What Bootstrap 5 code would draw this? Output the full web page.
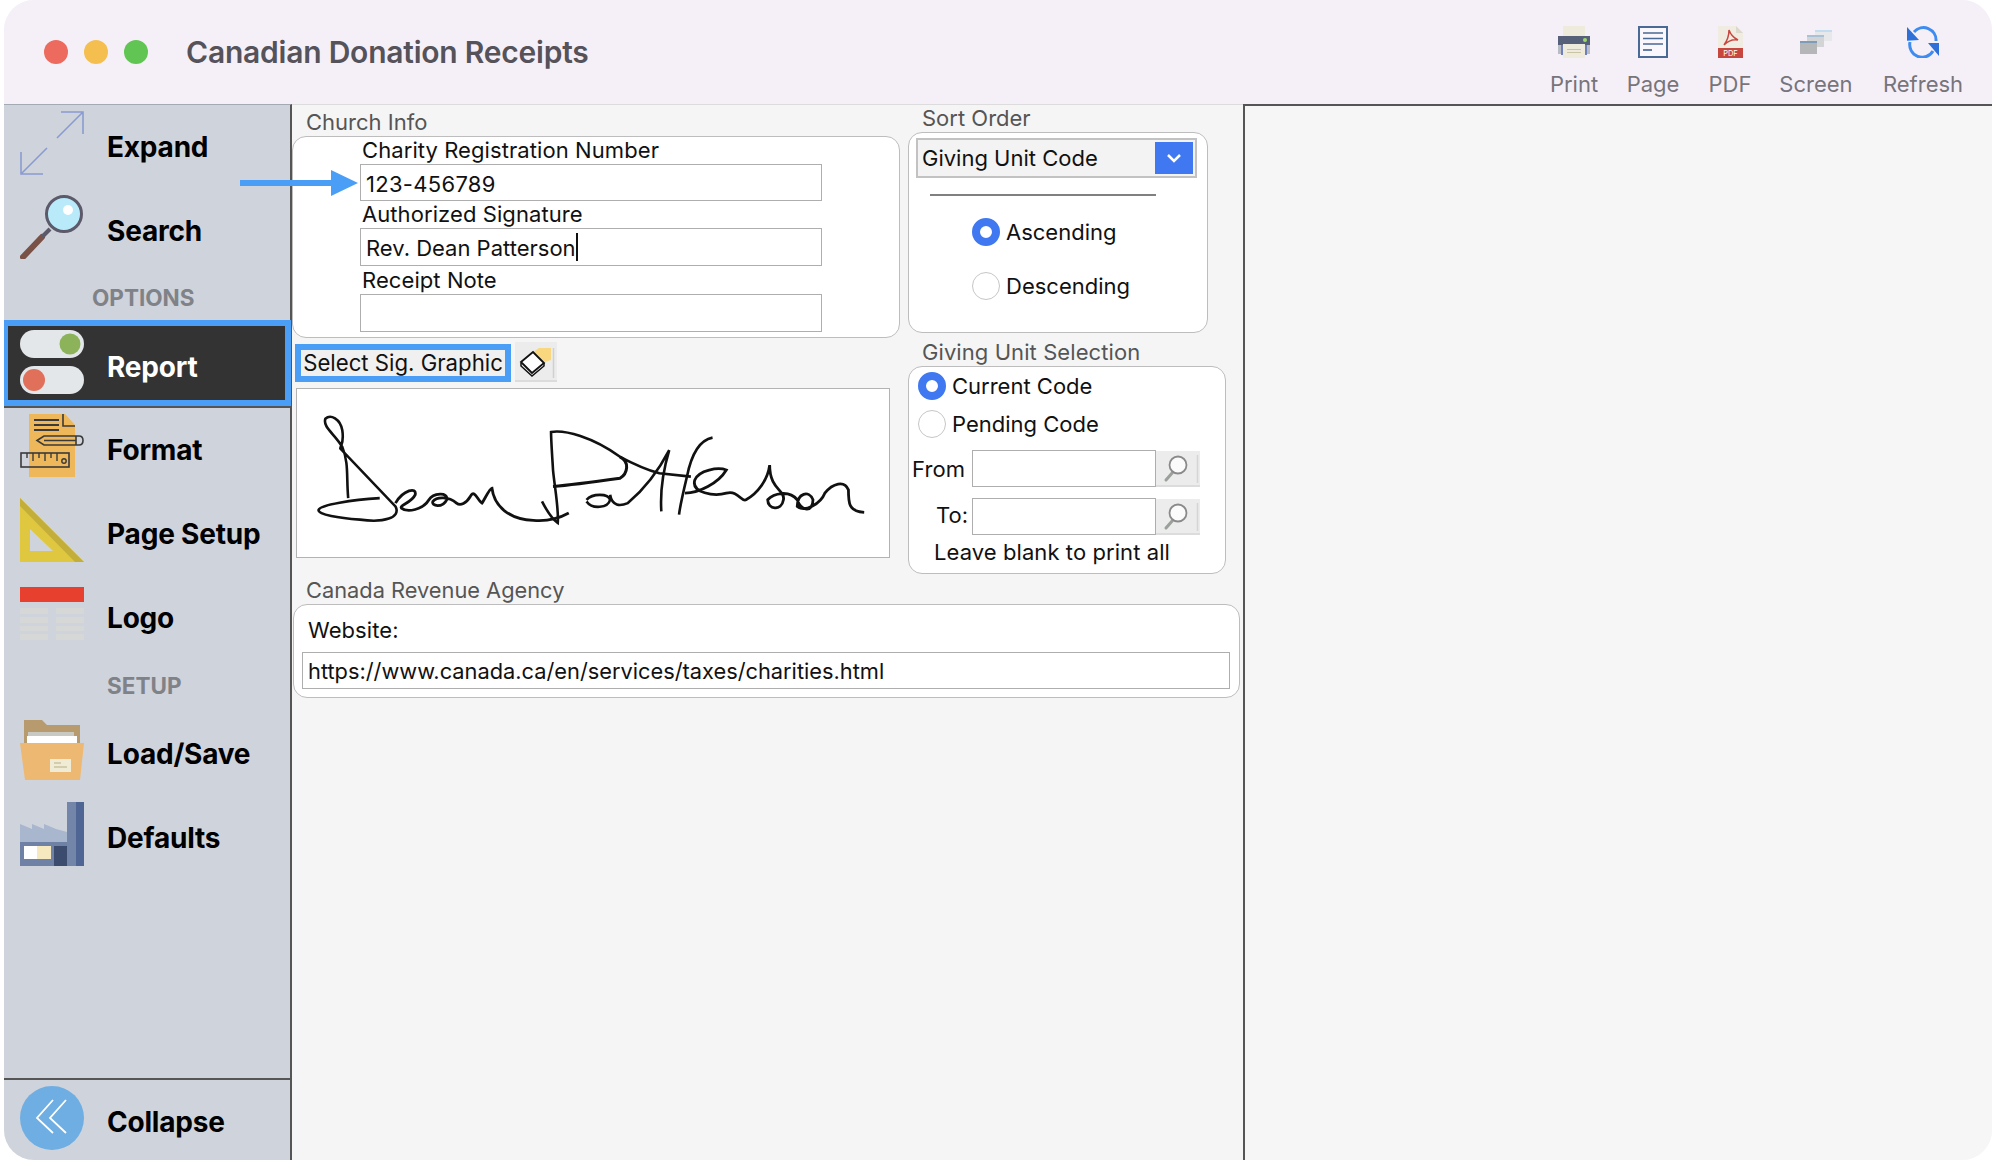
<!DOCTYPE html>
<html lang="en">
<head>
  <meta charset="UTF-8">
  <title>Canadian Donation Receipts</title>
  <link href="https://cdn.jsdelivr.net/npm/bootstrap@5.3.0/dist/css/bootstrap.min.css" rel="stylesheet">
  <style>
    html, body { height: 100%; background: #fff; overflow: hidden; }
    body { font-family: Inter, "Liberation Sans", sans-serif; color: #111; }
    .app-win { position: relative; margin-left: 4px; width: 1988px; height: 1160px; border-radius: 30px; overflow: hidden; background: #f5f5f5; }
    .title-bar { height: 104px; background: #f5f0f8; }
    .lights { padding-left: 40px; gap: 16px; margin-top: -1px; }
    .lights i { display: block; width: 24px; height: 24px; border-radius: 50%; }
    .win-title { margin-left: 38px; font-size: 30px; font-weight: 600; color: #56525a; line-height: 1; letter-spacing: -.22px; }
    .tool-item { position: absolute; top: 26px; display: flex; flex-direction: column; align-items: center; width: 100px; font-size: 22px; color: #77747b; line-height: 1; }
    .tool-item svg { height: 32px; margin-bottom: 15px; }
    .main-area { height: 1056px; }

    .side-bar { width: 288px; background: #cfd3dc; border-right: 2px solid #555; border-top: 1px solid #a5a9b3; }
    .side-row { height: 84px; padding-left: 16px; font-size: 28px; font-weight: 700; color: #000; letter-spacing: -.2px; }
    .side-row svg { width: 64px; height: 64px; margin-bottom: 8px; margin-right: 23px; flex: none; }
    .side-head { font-size: 22.5px; font-weight: 700; color: #7f8287; padding-top: 2px; }
    .side-sel { height: 86px; margin: 0 0 0 -2px; width: 289px; background: #333; border: 6px solid #4a9ef5; color: #fff; padding-left: 12px; padding-top: 8px; position: relative; z-index: 1; }
    .side-sel svg { margin-bottom: 10px; }
    .side-foot { height: 82px; border-top: 2px solid #555; padding-top: 4px; }

    .mid-pane { width: 951px; border-top: 1px solid #dcdcdc; }
    .end-pane { border-left: 2px solid #555; border-top: 2px solid #555; background: #f6f6f6; }
    .left-col { width: 608px; }
    .right-col { width: 318px; margin-left: 8px; }
    .grp-label { font-size: 22px; color: #555; line-height: 1; }
    .grp-box { background: #fff; border: 1.5px solid #bdbdbd; border-radius: 14px; }
    .fld-label { font-size: 22px; line-height: 1; color: #111; letter-spacing: .08px; }
    .fld-input { background: #fff; border: 1.5px solid #aeaeae; font-size: 22px; line-height: 1; color: #111; display: flex; align-items: center; padding: 2px 0 0 5px; }
    .caret-bar { display: inline-block; width: 2px; height: 28px; background: #111; margin-top: -2px; }
    .sig-btn { width: 216px; height: 38px; border: 6px solid #4a9ef5; background: #f0f0f0; font-size: 22.2px; }
    .icon-btn { background: #ececec; border-bottom: 2px solid #dcdcdc; }
    .sig-box { width: 594px; height: 170px; background: #fff; border: 1.5px solid #b3b3b3; margin-left: 4px; }
    .sig-box svg { display: block; width: 100%; height: 100%; }
    .sel-box { height: 40px; margin: 5px 10px 0 7px; background: #f3f3f3; border: 2px solid #c2c2c2; font-size: 22px; padding: 0 2px 0 4px; }
    .sel-arrow { width: 38px; height: 32px; background: #3f78f0; margin-top: -1px; }
    .sep-line { height: 2px; background: #808080; width: 226px; margin: 16px 0 0 21px; }
    .rd { width: 28px; height: 28px; border-radius: 50%; background: #fff; border: 1px solid #c6c6c6; flex: none; }
    .rd-on { background: #fff; border: 8px solid #3f78f0; }
    .rd-row { font-size: 22px; line-height: 1; }
    .arrow-mark { position: absolute; left: 236px; top: 170px; width: 118px; height: 26px; z-index: 3; }
  </style>
</head>
<body>
  <div class="app-win">
    <div class="title-bar d-flex align-items-center">
      <div class="lights d-flex">
        <i style="background:#ec6a5e"></i><i style="background:#f4bf4f"></i><i style="background:#61c554"></i>
      </div>
      <div class="win-title">Canadian Donation Receipts</div>

      <div class="tool-item" style="left:1520px">
        <svg viewBox="0 0 32 32" width="32"><rect x="5" y="0" width="22" height="12" fill="#efebdc"/><rect x="0" y="10" width="32" height="13" fill="#566078"/><rect x="0" y="19" width="3" height="9" fill="#b8bcc4"/><rect x="29" y="19" width="3" height="9" fill="#b8bcc4"/><rect x="3" y="19" width="2" height="10" fill="#6f7fb8"/><rect x="27" y="19" width="2" height="10" fill="#6f7fb8"/><rect x="5" y="18" width="22" height="14" fill="#efebdc"/><rect x="9" y="23" width="14" height="1" fill="#c9c4a6"/><rect x="9" y="26" width="14" height="1" fill="#c9c4a6"/><circle cx="27" cy="14" r="2" fill="#9fd86a"/></svg>
        Print
      </div>
      <div class="tool-item" style="left:1599px">
        <svg viewBox="0 0 30 32" width="30"><rect x="1" y="1" width="28" height="30" fill="#f9f7fb" stroke="#4a6a96" stroke-width="2"/><path d="M5 7H25M5 12.500H25M5 18H25" stroke="#4a6a96" stroke-width="1.700" fill="none"/><path d="M5 24H14" stroke="#4a6a96" stroke-width="1.700"/></svg>
        Page
      </div>
      <div class="tool-item" style="left:1676px">
        <svg viewBox="0 0 25 32" width="25"><path d="M0 0H18L25 7V32H0Z" fill="#f0ece2"/><path d="M18 0L25 7H18Z" fill="#dcd8cc"/><rect x="0" y="22" width="25" height="10" fill="#c7473f"/><path d="M11 4C11 10 9 15 6 19C10 15 15 13 20 14C16 12 13 10 11 4Z" fill="none" stroke="#c7473f" stroke-width="1.500"/><text x="12.500" y="30" font-size="7.500" font-family="Inter" fill="#fff" text-anchor="middle">PDF</text></svg>
        PDF
      </div>
      <div class="tool-item" style="left:1762px">
        <svg viewBox="0 0 32 32" width="32"><rect x="15" y="4" width="17" height="11" fill="#e6e8ea"/><rect x="15" y="4" width="17" height="2" fill="#c3ddf0"/><rect x="7" y="9" width="17" height="12" fill="#d2d4d6"/><rect x="7" y="9" width="17" height="2" fill="#a9c1d6"/><rect x="0" y="15" width="17" height="13" fill="#b4b6b8"/><rect x="0" y="15" width="17" height="2" fill="#7e9cb8"/></svg>
        Screen
      </div>
      <div class="tool-item" style="left:1869px">
        <svg viewBox="0 0 32 32" width="32"><path d="M7 6A12.500 12.500 0 0 1 29 15" fill="none" stroke="#3f8cf0" stroke-width="3"/><path d="M26 25A12.500 12.500 0 0 1 3 16" fill="none" stroke="#3f8cf0" stroke-width="3"/><path d="M0 1L12 14H0Z" fill="#2f6fd8"/><path d="M0 14H12L0 15Z" fill="#4f96f5"/><path d="M32 30L21 17H32Z" fill="#2f6fd8"/></svg>
        Refresh
      </div>
    </div>

    <div class="main-area d-flex">
      <div class="side-bar d-flex flex-column">
        <div class="side-row d-flex align-items-center">
          <svg viewBox="0 0 64 64"><path d="M41 1H63V23M63 1L37 27M1 41V63H23M1 63L27 37" fill="none" stroke="#8a9bd0" stroke-width="1.600"/></svg>
          Expand
        </div>
        <div class="side-row d-flex align-items-center">
          <svg viewBox="0 0 64 64"><path d="M3 62L22 42" stroke="#7a5146" stroke-width="6" stroke-linecap="round"/><path d="M22 42L30 34" stroke="#5c5a6a" stroke-width="4"/><circle cx="44" cy="19" r="17.500" fill="#b8eafa" stroke="#5c5a6a" stroke-width="3"/><circle cx="48" cy="15" r="5" fill="#fff"/></svg>
          Search
        </div>
        <div class="side-head d-flex align-items-center" style="height:47px;padding-left:88px">OPTIONS</div>
        <div class="side-row side-sel d-flex align-items-center">
          <svg viewBox="0 0 64 64"><rect x="0" y="0" width="64" height="28" rx="14" fill="#e4e7ea"/><circle cx="50" cy="14" r="10.500" fill="#8db35a"/><rect x="0" y="36" width="64" height="28" rx="14" fill="#e4e7ea"/><circle cx="14" cy="50" r="11" fill="#e0705a"/></svg>
          Report
        </div>
        <div style="height:2px;background:#555"></div>
        <div class="side-row d-flex align-items-center">
          <svg viewBox="0 0 64 64" fill="none"><path d="M9 0H45L55 11V63H9Z" fill="#eeb75a"/><path d="M14 6H39M14 11H39M14 16H39" stroke="#3a3a3a" stroke-width="1.800"/><path d="M43 0V12H55" stroke="#3a3a3a" stroke-width="1.600"/><path d="M17 26.500L24 22H59Q63 22 63 26.500Q63 31 59 31H24Z" stroke="#3a3a3a" stroke-width="1.600"/><path d="M24 26.500H56M56 22V31" stroke="#3a3a3a" stroke-width="1.600"/><rect x="1" y="39" width="48" height="14" stroke="#3a3a3a" stroke-width="1.600"/><path d="M7 39V44M13 39V47M19 39V44M25 39V47M31 39V44M37 39V47" stroke="#3a3a3a" stroke-width="1.400"/><circle cx="44" cy="47" r="2.200" stroke="#3a3a3a" stroke-width="1.400"/></svg>
          Format
        </div>
        <div class="side-row d-flex align-items-center">
          <svg viewBox="0 0 64 64"><path d="M0 0L64 64H0Z" fill="#dfc83f"/><path d="M0 0L64 64H55L0 8Z" fill="#c4ae3a"/><path d="M10 31V53H33Z" fill="#cfd3dc"/></svg>
          Page Setup
        </div>
        <div class="side-row d-flex align-items-center">
          <svg viewBox="0 0 64 64"><rect y="5" width="64" height="15" fill="#e8402f"/><path d="M0 26H28V32H0ZM36 26H64V32H36ZM0 35H28V41H0ZM36 35H64V41H36ZM0 44H28V49H0ZM36 44H64V49H36ZM0 52H28V58H0ZM36 52H64V58H36Z" fill="#d6d8d8"/></svg>
          Logo
        </div>
        <div class="side-head d-flex align-items-center" style="height:50px;padding-left:103px;margin-bottom:2px">SETUP</div>
        <div class="side-row d-flex align-items-center">
          <svg viewBox="0 0 64 64"><path d="M4 2H22L27 7H60V40H4Z" fill="#b79a6e"/><rect x="8" y="14" width="46" height="8" fill="#c9c9c4"/><rect x="7" y="18" width="50" height="12" fill="#fff"/><path d="M0 25H64L60 62H5Z" fill="#edb871"/><rect x="30" y="41" width="21" height="13" fill="#f0ebd5"/><path d="M34 45H41M34 49H47" stroke="#c9c2a0" stroke-width="1.300"/></svg>
          Load/Save
        </div>
        <div class="side-row d-flex align-items-center">
          <svg viewBox="0 0 64 64"><path d="M0 40V22L12 27V22L24 27V22L36 27L47 30V64H0Z" fill="#a8b6ce"/><rect y="40" width="47" height="24" fill="#6f81a5"/><rect x="47" y="0" width="9" height="64" fill="#7385a8"/><rect x="56" y="0" width="8" height="64" fill="#4f6694"/><rect x="4" y="44" width="13" height="13" fill="#fff"/><rect x="17" y="44" width="14" height="13" fill="#f6e8bf"/><rect x="34" y="44" width="13" height="20" fill="#3b4c6e"/></svg>
          Defaults
        </div>
        <div class="flex-grow-1"></div>
        <div class="side-row side-foot d-flex align-items-center">
          <svg viewBox="0 0 64 64"><circle cx="32" cy="32" r="32" fill="#6eaee2"/><path d="M33 14L17 32L33 47M46 14L30 32L46 47" fill="none" stroke="#fff" stroke-width="1.800"/></svg>
          Collapse
        </div>
      </div>

      <div class="mid-pane">
        <div class="d-flex">
          <div class="left-col">
            <div class="grp-label" style="height:31px;padding:6px 0 0 14px">Church Info</div>
            <div class="grp-box" style="height:202px;padding:2px 0 0 67px">
              <div class="fld-label" style="height:25px;padding-left:2px">Charity Registration Number</div>
              <div class="fld-input" style="width:462px;height:37px;letter-spacing:.3px">123-456789</div>
              <div class="fld-label" style="height:27px;padding:2px 0 0 2px">Authorized Signature</div>
              <div class="fld-input" style="width:462px;height:38px">Rev. Dean Patterson<span class="caret-bar"></span></div>
              <div class="fld-label" style="height:28px;padding:3px 0 0 2px">Receipt Note</div>
              <div class="fld-input" style="width:462px;height:38px"></div>
            </div>
            <div class="d-flex" style="margin-top:4px">
              <div class="sig-btn d-flex align-items-center justify-content-center" style="margin:2px 0 0 3px">Select Sig. Graphic</div>
              <div class="icon-btn" style="width:42px;height:40px;margin-left:4px">
                <svg viewBox="0 0 42 40" width="42" height="40"><path d="M18 10L24 6H36V18L30 20Z" fill="#f9d77e"/><path d="M6 20L18 10L29 21L17 31Z" fill="#fff" stroke="#111" stroke-width="1.800"/><path d="M6 21V24L17 34L29 24V21" fill="none" stroke="#111" stroke-width="1.500"/><path d="M38.500 6V36" stroke="#d0d0d0" stroke-width="1.500"/></svg>
              </div>
            </div>
            <div class="sig-box" style="margin-top:6px">
              <svg viewBox="40 175 1503 508" preserveAspectRatio="none" fill="none" stroke="#111">
                <path vector-effect="non-scaling-stroke" stroke-width="2.600" d="M170 505C165 440 172 400 155 350C135 310 105 290 112 265C125 250 150 265 155 300C160 340 150 345 150 355L290 530C305 565 260 580 200 570C150 565 90 555 95 540C100 525 180 510 250 505"/>
                <path vector-effect="non-scaling-stroke" stroke-width="2.800" d="M290 520C310 480 345 470 340 495C330 520 300 525 305 535C320 550 360 540 375 510C385 490 425 485 420 510C410 535 380 530 385 515C395 500 425 500 445 520C455 530 470 520 480 500C490 475 500 515 510 520C520 500 530 475 535 475C540 530 580 570 640 572C670 575 700 570 730 550"/>
                <path vector-effect="non-scaling-stroke" stroke-width="2.600" d="M662 515C675 545 690 570 702 580C705 540 695 480 690 420C688 380 685 330 685 305C720 298 790 320 860 380C900 405 930 420 960 430L1040 440"/>
                <path vector-effect="non-scaling-stroke" stroke-width="3" d="M860 380C885 395 880 430 860 445C800 455 740 465 690 470"/>
                <path vector-effect="non-scaling-stroke" stroke-width="2.600" d="M775 510C790 490 830 490 835 510C830 535 790 540 775 515M835 495C840 530 860 530 880 520C910 490 950 440 985 360C970 420 962 490 965 545"/>
                <path vector-effect="non-scaling-stroke" stroke-width="2.600" d="M1095 322C1060 330 1040 380 1030 440C1020 490 1012 530 1010 555"/>
                <path vector-effect="non-scaling-stroke" stroke-width="2.800" d="M1025 490C1060 490 1110 460 1130 420C1110 410 1060 420 1050 450C1040 490 1100 500 1130 490C1160 480 1170 520 1180 510C1210 490 1235 450 1240 405C1240 480 1280 480 1275 510C1270 545 1235 540 1235 510C1250 490 1290 480 1310 510C1320 545 1350 550 1350 510C1340 480 1310 490 1310 530C1330 550 1370 520 1380 490C1400 460 1430 450 1440 480C1440 520 1440 545 1480 548"/>
              </svg>
            </div>
          </div>

          <div class="right-col">
            <div class="grp-label" style="height:27px;padding:2px 0 0 14px">Sort Order</div>
            <div class="grp-box" style="height:201px;width:300px">
              <div class="sel-box d-flex align-items-center justify-content-between">
                Giving Unit Code
                <span class="sel-arrow d-flex align-items-center justify-content-center"><svg viewBox="0 0 16 10" width="16" height="10"><path d="M2 2L8 8L14 2" fill="none" stroke="#fff" stroke-width="2.500"/></svg></span>
              </div>
              <div class="sep-line"></div>
              <div class="rd-row d-flex align-items-center" style="margin:22px 0 0 63px;gap:6px"><span class="rd rd-on"></span>Ascending</div>
              <div class="rd-row d-flex align-items-center" style="margin:26px 0 0 63px;gap:6px"><span class="rd"></span>Descending</div>
            </div>
            <div class="grp-label" style="height:33px;padding:8px 0 0 14px;letter-spacing:.08px">Giving Unit Selection</div>
            <div class="grp-box" style="height:208px;padding:5px 0 0 9px">
              <div class="rd-row d-flex align-items-center" style="gap:6px"><span class="rd rd-on"></span>Current Code</div>
              <div class="rd-row d-flex align-items-center" style="margin-top:10px;gap:6px"><span class="rd"></span>Pending Code</div>
              <div class="d-flex align-items-center" style="margin:12px 0 0 -6px">
                <div class="fld-label" style="width:60px">From</div>
                <div class="fld-input" style="width:184px;height:37px"></div>
                <div class="icon-btn" style="width:44px;height:36px"><svg viewBox="0 0 44 36" width="44" height="36"><path d="M10 29L17 21" stroke="#9aa09a" stroke-width="3" stroke-linecap="round"/><circle cx="22" cy="14" r="8.500" fill="#fbfbfb" stroke="#8a8a8a" stroke-width="1.800"/><path d="M41.500 4V32" stroke="#d5d5d5" stroke-width="1.500"/></svg></div>
              </div>
              <div class="d-flex align-items-center" style="margin:11px 0 0 -6px">
                <div class="fld-label" style="width:60px;padding:0 0 3px 24px">To:</div>
                <div class="fld-input" style="width:184px;height:37px"></div>
                <div class="icon-btn" style="width:44px;height:36px"><svg viewBox="0 0 44 36" width="44" height="36"><path d="M10 29L17 21" stroke="#9aa09a" stroke-width="3" stroke-linecap="round"/><circle cx="22" cy="14" r="8.500" fill="#fbfbfb" stroke="#8a8a8a" stroke-width="1.800"/><path d="M41.500 4V32" stroke="#d5d5d5" stroke-width="1.500"/></svg></div>
              </div>
              <div class="fld-label" style="margin:6px 0 0 16px">Leave blank to print all</div>
            </div>
          </div>
        </div>

        <div class="grp-label" style="padding:0 0 0 14px;margin-top:6px;height:24px;font-size:21.800px">Canada Revenue Agency</div>
        <div class="grp-box" style="width:947px;height:94px;margin-left:1px;padding:14px 0 0 8px">
          <div class="fld-label" style="padding-left:6px;height:33px">Website:</div>
          <div class="fld-input" style="width:928px;height:37px;font-size:21.800px;padding-top:3px">https://www.canada.ca/en/services/taxes/charities.html</div>
        </div>
      </div>

      <div class="end-pane flex-grow-1"></div>
    </div>

    <svg class="arrow-mark" viewBox="0 0 118 26"><path d="M0 10H91V0L118 13L91 26V16H0Z" fill="#4a9ef5"/></svg>
  </div>
  <script src="https://cdn.jsdelivr.net/npm/bootstrap@5.3.0/dist/js/bootstrap.bundle.min.js"></script>
</body>
</html>
